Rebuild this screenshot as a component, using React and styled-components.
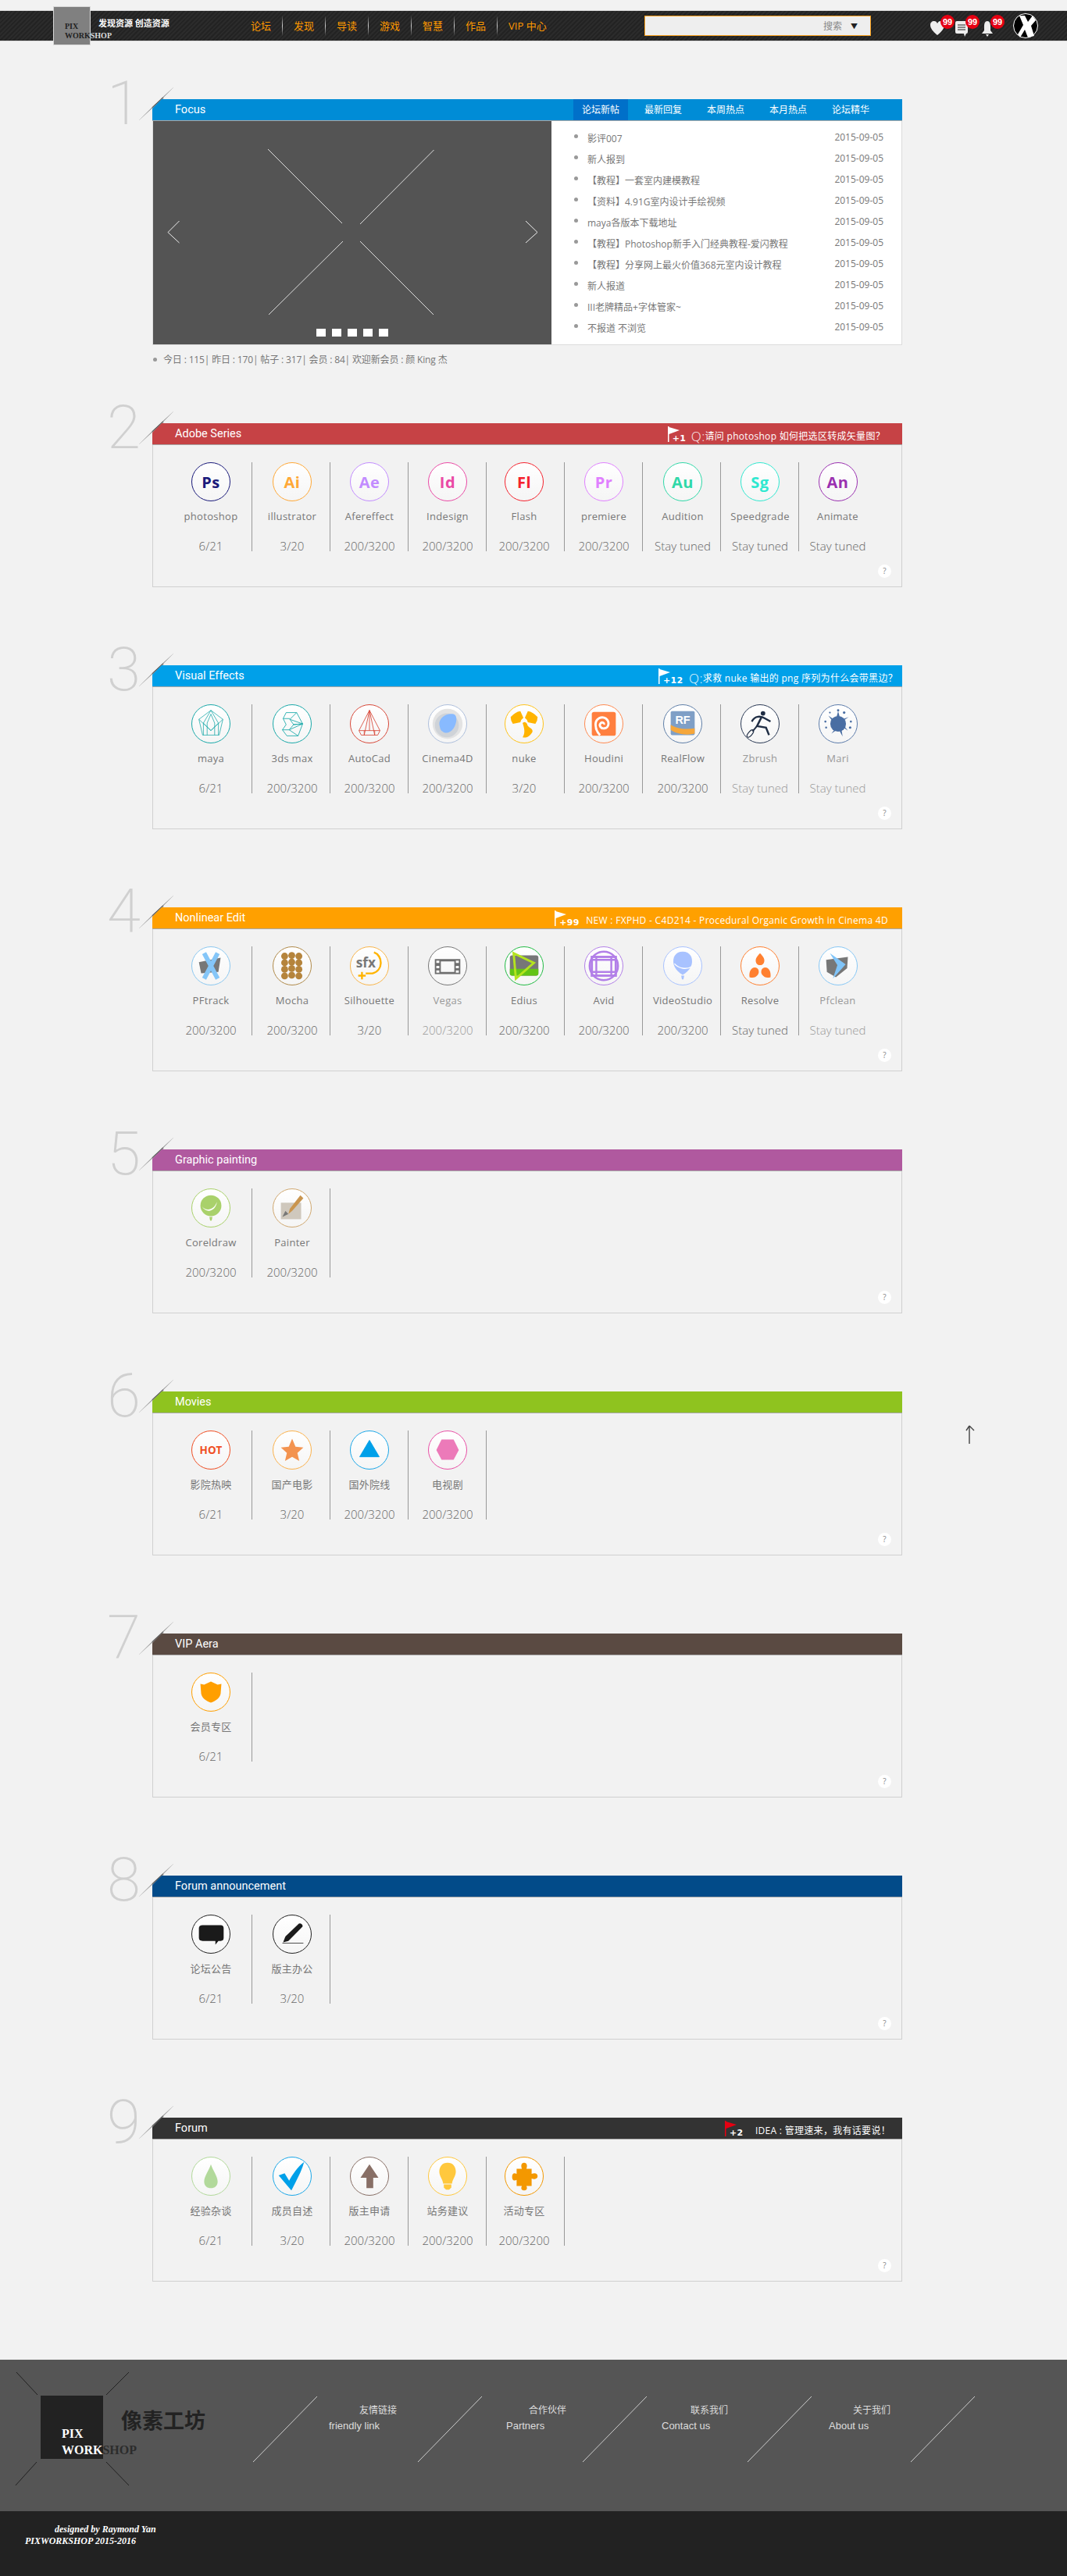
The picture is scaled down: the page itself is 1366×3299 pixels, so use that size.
import React from 'react';
import styled, { createGlobalStyle } from 'styled-components';

const SANS = `"Open Sans", "Noto Sans CJK SC", sans-serif`;

const GlobalStyle = createGlobalStyle`
  body {
    margin: 0;
    background: #f2f2f2;
    font-family: ${SANS};
  }
`;

/* column nudges, the original cells are not quite centred */
const COL_DX = [-2.5, 1.5, 0.5, 0.5, -1.5, 0.5, 1.5, 0.5, -0.5];

const Page = styled.div`
  position: relative;
  width: 1366px;
  height: 3299px;
  overflow: hidden;
`;

/* ---------- header ---------- */
const Header = styled.header`
  margin-top: 13px;
  height: 38px;
  display: flex;
  align-items: center;
  padding: 0 37px 0 68px;
  border-top: 1px solid #d8d8d8;
  box-shadow: 0 1px 0 #d8d8d8;
  background: repeating-linear-gradient(135deg, #2b2b2b 0, #2b2b2b 2px, #232323 2px, #232323 4px);
`;

const LogoBox = styled.div`
  flex: none;
  box-sizing: border-box;
  width: 48px;
  height: 50px;
  padding: 19px 0 0 14px;
  background: #808080;
  border: 1px solid #d8d8d8;
  font: bold 10px/12px "Liberation Serif", serif;
  color: #222;
  white-space: nowrap;
  span { color: #ddd; }
`;

const Tagline = styled.div`
  flex: none;
  width: 195px;
  margin: -8px 0 0 10px;
  color: #fff;
  font-size: 11px;
  font-weight: 700;
`;

const Nav = styled.nav`
  display: flex;
  align-items: center;
`;

const NavItem = styled.a`
  height: 26px;
  line-height: 26px;
  padding-right: 15px;
  margin-right: 14px;
  color: #f90;
  font-size: 13px;
  white-space: nowrap;
  background: linear-gradient(#ffffff00, #cfcfcf 50%, #ffffff00) right / 1px 100% no-repeat;
  &:last-child { background: none; }
`;

const Search = styled.div`
  box-sizing: border-box;
  width: 290px;
  height: 26px;
  margin-left: auto;
  padding-right: 16px;
  display: flex;
  align-items: center;
  justify-content: flex-end;
  gap: 11px;
  background: #eee;
  border: 1px solid #f9a01b;
  font-size: 12px;
  color: #888;
  i { font-style: normal; color: #222; font-size: 9px; }
`;

const HeadIcons = styled.div`
  display: flex;
  align-items: center;
  gap: 12px;
  margin-left: 75px;
`;

const HeadIcon = styled.div`
  position: relative;
  width: 20px;
  height: 20px;
  margin-top: 6px;
`;

const Badge = styled.b`
  position: absolute;
  top: -7px;
  left: 14px;
  width: 18px;
  height: 18px;
  border-radius: 50%;
  background: #e60012;
  color: #fff;
  font: bold 11px/18px "Liberation Sans", sans-serif;
  text-align: center;
`;

const Avatar = styled.svg`
  width: 32px;
  height: 32px;
  margin-left: 11px;
`;

/* ---------- sections ---------- */
const Section = styled.section`
  display: flex;
  align-items: flex-start;
  margin: 0 0 100px 137px;
  &:first-of-type { margin-top: 75px; margin-bottom: 64px; }
`;

const Numeral = styled.div`
  flex: none;
  width: 58px;
  height: 80px;
  margin-top: -39px;
  font: 200 78px/90px Roboto, "Liberation Sans", sans-serif;
  color: #d0d0d0;
`;

const Panel = styled.div`
  position: relative;
  width: 960px;
`;

const Slash = styled.svg`
  position: absolute;
  left: -17px;
  top: -15px;
  width: 46px;
  height: 44px;
  pointer-events: none;
`;

const Bar = styled.div`
  box-sizing: border-box;
  height: 28px;
  display: flex;
  align-items: center;
  justify-content: space-between;
  padding: 0 ${p => p.$right}px 0 29px;
  background: ${p => p.$color};
  border-bottom: 1px solid #a8a8a8;
  clip-path: polygon(12px 0, 100% 0, 100% 100%, 0 100%, 0 12px);
  color: #fff;
`;

const BarTitle = styled.div`
  font: 14.500px Roboto, "Liberation Sans", sans-serif;
  margin-top: -1px;
`;

const Notice = styled.div`
  display: flex;
  align-items: center;
  font-size: 12px;
  letter-spacing: 0.3px;
  margin-top: 5px;
  white-space: nowrap;
`;

const Flag = styled.div`
  position: relative;
  width: ${p => p.$w}px;
  height: 21px;
  margin-top: -4px;
  b {
    position: absolute;
    left: 6px;
    bottom: -1px;
    font: bold 11px/12px "DejaVu Sans", sans-serif;
  }
  svg { position: absolute; left: 0; top: 0; }
`;

const Ask = styled.span`
  font-size: 17px;
  font-weight: 300;
  opacity: 0.9;
`;

const Body = styled.div`
  position: relative;
  box-sizing: border-box;
  height: 182px;
  display: flex;
  align-items: flex-start;
  padding: 22px 0 0 27px;
  border: 1px solid #d0d0d0;
  border-top: 0;
`;

const Cell = styled.div`
  box-sizing: border-box;
  flex: none;
  width: 100px;
  height: 114px;
  display: flex;
  flex-direction: column;
  align-items: center;
  border-right: 1px solid #999;
  padding: ${p => (p.$dx > 0 ? `0 0 0 ${p.$dx * 2}px` : `0 ${-p.$dx * 2}px 0 0`)};
  &:nth-child(9) { border-right: 0; }
`;

const Circle = styled.div`
  box-sizing: border-box;
  flex: none;
  width: 50px;
  height: 50px;
  display: flex;
  align-items: center;
  justify-content: center;
  border-radius: 50%;
  border: 1px solid ${p => p.$color};
  background: linear-gradient(#fff, #f5f5f5);
  color: ${p => p.$color};
  svg { width: 48px; height: 48px; }
`;

const Letters = styled.span`
  font-size: 20px;
  font-weight: 700;
  letter-spacing: 0.5px;
  color: ${p => p.$color};
`;

const Name = styled.div`
  height: 20px;
  margin-top: 9px;
  font-size: 13px;
  line-height: 20px;
  letter-spacing: 0.3px;
  color: ${p => (p.$dim ? '#999' : '#777')};
  white-space: nowrap;
`;

const Count = styled.div`
  height: 18px;
  margin-top: 18px;
  font-size: 15px;
  font-weight: 300;
  line-height: 20px;
  color: ${p => (p.$dim ? '#999' : '#666')};
  white-space: nowrap;
`;

const Help = styled.div`
  position: absolute;
  right: 13px;
  bottom: 11px;
  width: 17px;
  height: 17px;
  border-radius: 50%;
  background: #fff;
  color: #888;
  font: 10px/17px ${SANS};
  text-align: center;
`;

/* ---------- focus ---------- */
const Tabs = styled.div`
  display: flex;
  gap: 10px;
  height: 100%;
`;

const Tab = styled.div`
  width: 70px;
  line-height: 28px;
  text-align: center;
  font-size: 12px;
  color: #fff;
  background: ${p => (p.$active ? '#0070c9' : 'transparent')};
`;

const FocusBody = styled.div`
  display: flex;
  height: 287px;
  box-sizing: border-box;
  background: #fff;
  border: 1px solid #dcdcdc;
  border-top: 0;
`;

const Carousel = styled.div`
  position: relative;
  flex: none;
  width: 510px;
  height: 286px;
  background: #545454;
  svg { position: absolute; inset: 0; }
`;

const Dots = styled.div`
  position: absolute;
  left: 0;
  right: 0;
  bottom: 10px;
  display: flex;
  justify-content: center;
  gap: 8px;
  i { width: 12px; height: 10px; background: #fff; }
`;

const Topics = styled.ul`
  flex: 1;
  list-style: none;
  margin: 0;
  padding: 7px 23px 0 29px;
`;

const Topic = styled.li`
  height: 27px;
  display: flex;
  align-items: center;
  font-size: 12px;
  color: #777;
  span:nth-child(2) { margin-left: 12px; padding-top: 2px; flex: 1; }
  time { color: #777; }
`;

const Dot = styled.span`
  flex: none;
  width: 5px;
  height: 5px;
  border-radius: 50%;
  background: #999;
  margin-top: ${p => p.$mt || 0}px;
`;

const Stats = styled.div`
  display: flex;
  align-items: center;
  gap: 8px;
  height: 36px;
  padding-left: 1px;
  font-size: 12px;
  letter-spacing: -0.15px;
  color: #777;
`;

/* ---------- footer ---------- */
const FootMain = styled.div`
  box-sizing: border-box;
  height: 194px;
  display: flex;
  align-items: flex-start;
  padding: 46px 0 0 52px;
  background: #555;
`;

const FootLogo = styled.div`
  position: relative;
  flex: none;
  box-sizing: border-box;
  width: 80px;
  height: 81px;
  padding: 38px 0 0 27px;
  background: #222;
  color: #fff;
  font: bold 16px/21px "Liberation Serif", serif;
  white-space: nowrap;
  span { color: #2c2c2c; }
  svg { position: absolute; left: -35px; top: -35px; }
`;

const FootTitle = styled.div`
  flex: none;
  width: 108px;
  margin: 14px 0 0 23px;
  font-size: 27px;
  line-height: 36px;
  font-weight: 700;
  color: #222;
`;

const FootLinks = styled.div`
  display: flex;
  margin: 1px 0 0 61px;
`;

const FootLink = styled.div`
  flex: none;
  width: 211px;
  display: flex;
  align-items: flex-start;
`;

const FootSlash = styled.svg`
  flex: none;
  margin-left: ${p => p.$ml || 0}px;
`;

const FootText = styled.div`
  margin: 8px 0 0 ${p => p.$gap}px;
  color: #ddd;
  font-size: 12px;
  line-height: 20px;
  white-space: nowrap;
  div:first-child { margin-left: ${p => p.$indent}px; }
  div:last-child { font: 13px/20px "Liberation Sans", sans-serif; }
`;

const FootBottom = styled.div`
  box-sizing: border-box;
  height: 83px;
  padding: 16px 0 0 32px;
  background: #222;
  color: #fff;
  font: italic bold 12px/15px "Liberation Serif", serif;
  div:first-child { margin-left: 38px; }
`;

const Pointer = styled.svg`
  position: absolute;
  left: 1236px;
  top: 1824px;
`;

/* ---------- drawings ---------- */
const Svg = ({ children }) => <svg viewBox="0 0 50 50">{children}</svg>;

const ICONS = {
  maya: <Svg><g fill="none" stroke="#1aa9a9" strokeWidth=".8"><path d="M25 7 41 19 36 40H14L9 19Z" /><path d="M15 40V24L25 34 35 24V40M20 40V24L25 12 30 24V40M9 19 25 34 41 19M25 7 15 24M25 7 35 24" /></g></Svg>,
  max: <Svg><g fill="none" stroke="#1aa9a9" strokeWidth=".9"><path d="M17 10H31L22 19 27 26 21 33 33 41H18L12 33 17 26 13 18Z" /><path d="M22 19 39 25 27 26M27 26 39 25 33 41M39 25 31 10M21 33 39 25M13 18H22M12 33H21" /></g></Svg>,
  autocad: <Svg><g fill="none" stroke="#d8493a" strokeWidth=".9"><path d="M25 7 11 34H39ZM25 7 18 40M25 7 32 40M25 7V34M11 34 14 40H36L39 34M18 34V40M32 34V40" /></g></Svg>,
  c4d: <Svg><circle cx="25" cy="25" r="20" fill="#e3e3e3" /><circle cx="24" cy="27" r="16" fill="#cfd3d8" /><path d="M14 26C13 17 24 10 33 12 39 14 37 25 33 31 29 37 22 39 18 35 15 33 15 30 14 26Z" fill="#88baff" /></Svg>,
  nuke: <Svg><g fill="#ffb400"><path d="M7 16Q13 9 20 8L24 17Q21 19 20 23L10 25Q7 21 7 16Z" /><path d="M43 16Q37 9 30 8L26 17Q29 19 30 23L40 25Q43 21 43 16Z" /><path d="M23 24Q26 21 29 25C29 30 38 31 36 36 32 43 27 44 23 43 27 37 25 30 23 24Z" /></g></Svg>,
  houdini: <Svg><rect x="9" y="9" width="32" height="32" rx="3" fill="#ff7f3f" /><path d="M25 26C26 24 23 22 21 24 18 27 21 32 26 31 32 30 33 22 28 18 22 14 14 18 14 26 14 31 16 36 20 40" fill="none" stroke="#fff" strokeWidth="3" /></Svg>,
  realflow: <Svg><rect x="9" y="8" width="32" height="32" rx="2" fill="#7f9fc6" /><path d="M9 26C15 31 28 33 41 31V38C30 41 16 38 9 33Z" fill="#f6a73b" /><text x="25" y="25" textAnchor="middle" fontFamily="Liberation Sans" fontWeight="700" fontSize="15" fill="#fff">RF</text></Svg>,
  zbrush: <Svg><circle cx="29" cy="11" r="3" fill="#1f2d44" /><g fill="none" stroke="#1f2d44"><path d="M14 22C18 14 26 14 32 18L39 22" strokeWidth="2.4" /><path d="M27 16 21 28 33 30 37 40" strokeWidth="2.6" /><path d="M21 28 15 35" strokeWidth="2" /><ellipse cx="12" cy="38" rx="6" ry="2.500" transform="rotate(-50 12 38)" strokeWidth="1.2" /></g></Svg>,
  mari: <Svg><g fill="#4a6ea3"><circle cx="25" cy="25" r="10.500" /><path d="M25 8 28 19 22 19ZM12 14 23 22 20 25ZM39 16 29 23 28 20ZM38 34 28 27 30 24ZM16 38 23 29 26 31ZM31 42 25 31 29 30Z" /><circle cx="25" cy="7" r="1.500" /><circle cx="33" cy="10" r="1.700" /><circle cx="42" cy="22" r="1.400" /><circle cx="41" cy="30" r="1.600" /><circle cx="8" cy="22" r="1.400" /><circle cx="9" cy="30" r="1.300" /><circle cx="14" cy="10" r="1.200" /></g></Svg>,
  pftrack: <Svg><path d="M9 20 38 14 35 33 12 35Z" fill="#777" /><path d="M16 8 34 42M34 8 16 42" stroke="#85c6f8" strokeWidth="6" /></Svg>,
  mocha: <Svg><g fill="#b5843c">{[0, 1, 2].flatMap(c => [0, 1, 2, 3].map(r => <circle key={`${c}${r}`} cx={15 + c * 9.5} cy={12 + r * 8.8 + (c === 1 ? -1 : 0)} r="4.6" />))}</g></Svg>,
  sfx: <Svg><text x="7" y="27" fontFamily="Open Sans" fontWeight="700" fontSize="18" fill="#777">sfx</text><path d="M31 7C43 11 44 31 29 35H20" fill="none" stroke="#ffb400" strokeWidth="2.5" /><path d="M15 33V43M10 38H20" stroke="#ffb400" strokeWidth="2.5" /></Svg>,
  vegas: <Svg><path fillRule="evenodd" d="M8 16H42V36H8ZM16 19V33H34V19ZM10 18V21H14V18ZM10 25V28H14V25ZM10 31V34H14V31ZM36 18V21H40V18ZM36 25V28H40V25ZM36 31V34H40V31Z" fill="#6f6f6f" /></Svg>,
  edius: <Svg><rect x="6" y="11" width="38" height="27" rx="3" fill="#777" /><path d="M6 29H44V35Q44 38 41 38H9Q6 38 6 35Z" fill="#63c416" /><path d="M11 8 38 21 14 42Z" fill="none" stroke="#b4e41e" strokeWidth="3" /></Svg>,
  avid: <Svg><circle cx="25" cy="25" r="19" fill="none" stroke="#b27fe8" strokeWidth="2.5" /><rect x="9" y="13" width="32" height="25" fill="none" stroke="#b27fe8" strokeWidth="3" /><path d="M9 17H41M9 33H41M15 13V38M35 13V38" stroke="#b27fe8" strokeWidth="2.5" /></Svg>,
  vstudio: <Svg><path d="M25 6C35 6 39 14 37 23 35 30 29 35 25 37 21 35 15 30 13 23 11 14 15 6 25 6Z" fill="#a8c2ff" /><path d="M14 22C20 29 30 30 37 26" fill="none" stroke="#fff" strokeWidth="1.4" /><path d="M23 38H27L26 43H24Z" fill="#a8c2ff" /></Svg>,
  resolve: <Svg><g fill="#ff8030"><path d="M25 8C30 13 32 17 30 21 28 25 22 25 20 21 18 17 20 13 25 8Z" /><path d="M11 40C10 33 13 27 18 27 23 27 25 33 22 37 19 41 15 41 11 40Z" /><path d="M39 40C40 33 37 27 32 27 27 27 25 33 28 37 31 41 35 41 39 40Z" /></g></Svg>,
  pfclean: <Svg><path d="M9 17 38 13 37 28 22 40 10 33Z" fill="#777" /><path d="M14 8 35 23 18 42 24 24Z" fill="#80c4f8" /></Svg>,
  corel: <Svg><circle cx="25" cy="22" r="14" fill="#a9d16b" /><path d="M13 23C19 30 29 28 33 17 32 28 20 34 13 23Z" fill="#fff" /><path d="M23 37H27L26 42H24Z" fill="#a9d16b" /></Svg>,
  painter: <Svg><rect x="10" y="18" width="27" height="22" fill="#cfc8bd" /><path d="M36 8 40 12 25 29 20 33 22 26Z" fill="#c9954f" /><path d="M20 33 12 37 16 29Z" fill="#777" /></Svg>,
  hot: <Svg><text x="25" y="30" textAnchor="middle" fontFamily="Open Sans" fontWeight="700" fontSize="14" fill="#f04e23">HOT</text></Svg>,
  star: <Svg><path d="M25 10 29.5 20.5 40 21.5 32 29 34.5 39.5 25 34 15.5 39.5 18 29 10 21.5 20.5 20.5Z" fill="#f39350" /></Svg>,
  tri: <Svg><path d="M25 12 38 34H12Z" fill="#00a0e9" stroke="#00a0e9" strokeLinejoin="round" /></Svg>,
  hex: <Svg><path d="M17 11H33L40 25 33 38H17L10 25Z" fill="#ec7ab9" /></Svg>,
  shield: <Svg><path d="M11 14 16 15 25 11 34 15 39 14 38 27C37 33 31 37 25 39 19 37 13 33 12 27Z" fill="#ff9f00" /></Svg>,
  chat: <Svg><path d="M14 13H38Q42 13 42 17V30Q42 34 38 34H35L31 39V34H14Q9 34 9 30V17Q9 13 14 13Z" fill="#1a1a1a" /></Svg>,
  pen: <Svg><path d="M13 36 16 28 34 11Q36 10 38 12 40 14 38 16L20 34Z" fill="#1a1a1a" /><path d="M12 37H40" stroke="#1a1a1a" strokeWidth=".8" /></Svg>,
  drop: <Svg><path d="M25 9C28 18 34 25 34 32 34 38 30 41 25 41 20 41 16 38 16 32 16 25 22 18 25 9Z" fill="#b2d99b" /></Svg>,
  check: <Svg><path d="M7 24 15 21 21 31C26 22 32 13 41 6 38 18 30 32 24 44Z" fill="#00a0e9" /></Svg>,
  arrow: <Svg><path d="M25 9 37 27H30V41H21V27H13Z" fill="#886f66" /></Svg>,
  bulb: <Svg><path d="M25 7C32 7 36 12 36 19 36 25 31 30 31 35H19C19 30 14 25 14 19 14 12 18 7 25 7Z" fill="#ffc83d" /><path d="M20 36H30V40L27 43H23L20 40Z" fill="#ffc83d" /></Svg>,
  puzzle: <Svg><path d="M15 15H22C20 10 22 7 25 7 28 7 30 10 28 15H35V22C40 20 43 22 43 25 43 28 40 30 35 28V38H28C30 42 28 44 25 44 22 44 20 42 22 38H15V30C11 32 9 30 9 26 9 22 11 20 15 22Z" fill="#f39800" /></Svg>,
};

const Mark = ({ item }) => (
  <Circle $color={item.color}>
    {item.letters ? <Letters $color={item.color}>{item.letters}</Letters> : ICONS[item.icon]}
  </Circle>
);

const item = (name, count, color, mark, dim) =>
  mark.length <= 2 ? { name, count, color, letters: mark, dim } : { name, count, color, icon: mark, dim };

const SECTIONS = [
  {
    no: 2, title: 'Adobe Series', color: '#c64245', right: 22, flag: { label: '+1', w: 30, q: true, text: '请问 photoshop 如何把选区转成矢量图？' },
    items: [
      item('photoshop', '6/21', '#1a1a7a', 'Ps'),
      item('illustrator', '3/20', '#ffa836', 'Ai'),
      item('Afereffect', '200/3200', '#c28cff', 'Ae'),
      item('Indesign', '200/3200', '#ea4aa5', 'Id'),
      item('Flash', '200/3200', '#f5222d', 'Fl'),
      item('premiere', '200/3200', '#e080ff', 'Pr'),
      item('Audition', 'Stay tuned', '#30d8a8', 'Au'),
      item('Speedgrade', 'Stay tuned', '#30e8d0', 'Sg'),
      item('Animate', 'Stay tuned', '#9a30b0', 'An'),
    ],
  },
  {
    no: 3, title: 'Visual Effects', color: '#00a0e9', right: 6, flag: { label: '+12', w: 39, q: true, text: '求救 nuke 输出的 png 序列为什么会带黑边？' },
    items: [
      item('maya', '6/21', '#1aa9a9', 'maya'),
      item('3ds max', '200/3200', '#1aa9a9', 'max'),
      item('AutoCad', '200/3200', '#d8493a', 'autocad'),
      item('Cinema4D', '200/3200', '#aebfdc', 'c4d'),
      item('nuke', '3/20', '#ffc31a', 'nuke'),
      item('Houdini', '200/3200', '#ff8a50', 'houdini'),
      item('RealFlow', '200/3200', '#5f7fa8', 'realflow'),
      item('Zbrush', 'Stay tuned', '#2b3a55', 'zbrush', true),
      item('Mari', 'Stay tuned', '#5d7cab', 'mari', true),
    ],
  },
  {
    no: 4, title: 'Nonlinear Edit', color: '#ffa000', right: 18, flag: { label: '+99', w: 40, text: 'NEW : FXPHD - C4D214 - Procedural Organic Growth in Cinema 4D' },
    items: [
      item('PFtrack', '200/3200', '#8cc8f0', 'pftrack'),
      item('Mocha', '200/3200', '#b08a4a', 'mocha'),
      item('Silhouette', '3/20', '#f9b54a', 'sfx'),
      item('Vegas', '200/3200', '#777777', 'vegas', true),
      item('Edius', '200/3200', '#22bb44', 'edius'),
      item('Avid', '200/3200', '#b27fe8', 'avid'),
      item('VideoStudio', '200/3200', '#a8c2ff', 'vstudio'),
      item('Resolve', 'Stay tuned', '#ff8030', 'resolve'),
      item('Pfclean', 'Stay tuned', '#88c8f5', 'pfclean', true),
    ],
  },
  {
    no: 5, title: 'Graphic painting', color: '#b0599f',
    items: [
      item('Coreldraw', '200/3200', '#a9d16b', 'corel'),
      item('Painter', '200/3200', '#d0a870', 'painter'),
    ],
  },
  {
    no: 6, title: 'Movies', color: '#8fc31f',
    items: [
      item('影院热映', '6/21', '#f04e23', 'hot'),
      item('国产电影', '3/20', '#fbb24d', 'star'),
      item('国外院线', '200/3200', '#1ba7e8', 'tri'),
      item('电视剧', '200/3200', '#e84fa5', 'hex'),
    ],
  },
  {
    no: 7, title: 'VIP Aera', color: '#5a4a42',
    items: [item('会员专区', '6/21', '#ff9f00', 'shield')],
  },
  {
    no: 8, title: 'Forum announcement', color: '#024b89',
    items: [
      item('论坛公告', '6/21', '#222222', 'chat'),
      item('版主办公', '3/20', '#222222', 'pen'),
    ],
  },
  {
    no: 9, title: 'Forum', color: '#333333', right: 15, flag: { label: '+2', w: 39, red: true, text: 'IDEA : 管理速来，我有话要说！' },
    items: [
      item('经验杂谈', '6/21', '#b2d99b', 'drop'),
      item('成员自述', '3/20', '#1ba7e8', 'check'),
      item('版主申请', '200/3200', '#886f66', 'arrow'),
      item('站务建议', '200/3200', '#ffc83d', 'bulb'),
      item('活动专区', '200/3200', '#f39800', 'puzzle'),
    ],
  },
];

const TOPICS = [
  '影评007',
  '新人报到',
  '【教程】一套室内建模教程',
  '【资料】4.91G室内设计手绘视频',
  'maya各版本下载地址',
  '【教程】Photoshop新手入门经典教程-爱闪教程',
  '【教程】分享网上最火价值368元室内设计教程',
  '新人报道',
  'III老牌精品+字体管家~',
  '不报道 不浏览',
];

const NAV = ['论坛', '发现', '导读', '游戏', '智慧', '作品', 'VIP 中心'];
const TABS = ['论坛新帖', '最新回复', '本周热点', '本月热点', '论坛精华'];

const LINKS = [
  { cn: '友情链接', en: 'friendly link', gap: 14, indent: 39 },
  { cn: '合作伙伴', en: 'Partners', gap: 30, indent: 29 },
  { cn: '联系我们', en: 'Contact us', gap: 18, indent: 37 },
  { cn: '关于我们', en: 'About us', gap: 21, indent: 31 },
];

const SlashMark = ({ id }) => (
  <Slash viewBox="0 0 46 44">
    <defs>
      <linearGradient id={id} x1="0" y1="1" x2="1" y2="0">
        <stop offset="0" stopColor="#ddd" />
        <stop offset=".55" stopColor="#333" />
        <stop offset="1" stopColor="#ddd" />
      </linearGradient>
    </defs>
    <path d="M0 42 44 0" stroke={`url(#${id})`} fill="none" />
    <path d="M17 26 31 13" stroke="#555" strokeWidth="2" opacity=".6" fill="none" />
  </Slash>
);

const NoticeFlag = ({ flag }) => (
  <Notice>
    <Flag $w={flag.w}>
      <svg width="16" height="20" viewBox="0 0 16 20">
        <path d="M0 0H1.500V20H0ZM1.500 1 15 5 1.500 10Z" fill={flag.red ? '#e60012' : '#fff'} />
      </svg>
      <b>{flag.label}</b>
    </Flag>
    {flag.q && <Ask>Q:</Ask>}
    {flag.text}
  </Notice>
);

const Forum = ({ section }) => (
  <Section>
    <Numeral>{section.no}</Numeral>
    <Panel>
      <SlashMark id={`slash${section.no}`} />
      <Bar $color={section.color} $right={section.right || 0}>
        <BarTitle>{section.title}</BarTitle>
        {section.flag && <NoticeFlag flag={section.flag} />}
      </Bar>
      <Body>
        {section.items.map((it, i) => (
          <Cell key={it.name} $dx={COL_DX[i]}>
            <Mark item={it} />
            <Name $dim={it.dim}>{it.name}</Name>
            <Count $dim={it.dim}>{it.count}</Count>
          </Cell>
        ))}
        <Help>?</Help>
      </Body>
    </Panel>
  </Section>
);

export default function App() {
  return (
    <Page>
      <GlobalStyle />
      <Header>
        <LogoBox>PIX<br />WORK<span>SHOP</span></LogoBox>
        <Tagline>发现资源 创造资源</Tagline>
        <Nav>
          {NAV.map(n => <NavItem key={n}>{n}</NavItem>)}
        </Nav>
        <Search>搜索<i>▼</i></Search>
        <HeadIcons>
          <HeadIcon>
            <svg width="20" height="20" viewBox="0 0 20 20"><path d="M10 19C4 14 1 10 1 6 1 3 3 1 6 1 8 1 9 2 10 4 11 2 12 1 14 1 17 1 19 3 19 6 19 10 16 14 10 19Z" fill="#eee" /></svg>
            <Badge>99</Badge>
          </HeadIcon>
          <HeadIcon>
            <svg width="20" height="22" viewBox="0 0 20 22"><path d="M3 1H15Q17 1 17 3V15Q17 17 15 17L13 21 12 17H3Q1 17 1 15V3Q1 1 3 1Z" fill="#eee" /><path d="M4 6H14M4 9H14M4 12H14" stroke="#222" strokeWidth="1.2" /></svg>
            <Badge>99</Badge>
          </HeadIcon>
          <HeadIcon>
            <svg width="20" height="22" viewBox="0 0 20 22"><path d="M10 1C13 1 14 4 14 8V13L17 17H3L6 13V8C6 4 7 1 10 1ZM8 18H12L10 21Z" fill="#eee" /></svg>
            <Badge>99</Badge>
          </HeadIcon>
          <Avatar viewBox="0 0 32 32">
            <circle cx="16" cy="16" r="15.500" fill="#000" stroke="#fff" />
            <path d="M8 3 15 3 19 11 25 3 29 9 23 16 27 29 19 31 15 21 9 31 6 27 13 15Z" fill="#fff" />
          </Avatar>
        </HeadIcons>
      </Header>

      <main>
        <Section>
          <Numeral>1</Numeral>
          <Panel>
            <SlashMark id="slash1" />
            <Bar $color="#008cd6" $right={31}>
              <BarTitle>Focus</BarTitle>
              <Tabs>
                {TABS.map((t, i) => <Tab key={t} $active={i === 0}>{t}</Tab>)}
              </Tabs>
            </Bar>
            <FocusBody>
              <Carousel>
                <svg width="510" height="286" viewBox="0 0 510 286">
                  <path d="M147 36 242 131M359.500 37 265 132M243 154 148 248M265 154 359 248" stroke="#ddd" fill="none" />
                  <path d="M33.500 128 19 142.500 33.500 156M477 128 492 142.500 477 156" stroke="#eee" fill="none" />
                </svg>
                <Dots><i /><i /><i /><i /><i /></Dots>
              </Carousel>
              <Topics>
                {TOPICS.map(t => (
                  <Topic key={t}>
                    <Dot $mt={-2} />
                    <span>{t}</span>
                    <time>2015-09-05</time>
                  </Topic>
                ))}
              </Topics>
            </FocusBody>
            <Stats>
              <Dot />
              今日 : 115| 昨日 : 170| 帖子 : 317| 会员 : 84| 欢迎新会员 : 颜 King 杰
            </Stats>
          </Panel>
        </Section>
        {SECTIONS.map(s => <Forum key={s.no} section={s} />)}
      </main>

      <footer>
        <FootMain>
          <FootLogo>
            <svg width="150" height="150" viewBox="-35 -35 150 150">
              <path d="M-31 -30-4-1M113-30 84-1M-5 85-33 116M84 85 114 116" stroke="#222" fill="none" />
            </svg>
            PIX<br />WORK<span>SHOP</span>
          </FootLogo>
          <FootTitle>像素工坊</FootTitle>
          <FootLinks>
            {LINKS.map(l => (
              <FootLink key={l.en}>
                <FootSlash width="83" height="84" viewBox="0 0 83 84">
                  <path d="M0 84 82 0" stroke="#ccc" fill="none" />
                </FootSlash>
                <FootText $gap={l.gap} $indent={l.indent}>
                  <div>{l.cn}</div>
                  <div>{l.en}</div>
                </FootText>
              </FootLink>
            ))}
            <FootSlash $ml={-2} width="83" height="84" viewBox="0 0 83 84">
              <path d="M0 84 82 0" stroke="#ccc" fill="none" />
            </FootSlash>
          </FootLinks>
        </FootMain>
        <FootBottom>
          <div>designed by Raymond Yan</div>
          <div>PIXWORKSHOP 2015-2016</div>
        </FootBottom>
      </footer>

      <Pointer width="14" height="26" viewBox="0 0 14 26">
        <path d="M5 25V2M5 2 1 8M5 2 11 8" stroke="#444" strokeWidth="1.4" fill="none" />
      </Pointer>
    </Page>
  );
}
